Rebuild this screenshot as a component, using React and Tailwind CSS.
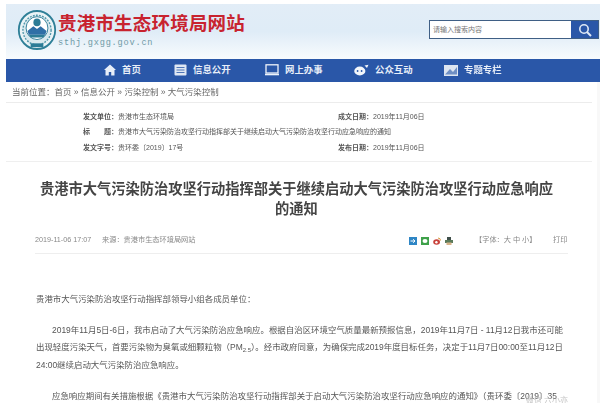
import React from "react";

const FONT = { fontFamily: '"Liberation Sans","Noto Sans CJK SC",sans-serif' };

function Logo() {
  return (
    <svg width="40" height="40" viewBox="0 0 44 42" className="shrink-0" preserveAspectRatio="none">
      <circle cx="22" cy="21" r="20" fill="#eaf3f6" stroke="#2e7f97" strokeWidth="2" />
      <circle cx="22" cy="21" r="15.5" fill="#d9e9ee" stroke="#4f97aa" strokeWidth="1.5" strokeDasharray="2 1.4" />
      <circle cx="22" cy="19" r="12" fill="#fff" stroke="#2c7c96" strokeWidth="1" />
      <circle cx="22" cy="13" r="4" fill="#2c7c96" />
      <path d="M11.5 22 L18 17 L22 20 L26 17 L32.5 22 L31 26 L13 26 Z" fill="#2f6fa6" />
      <path d="M13 26 H31 L29 29 H15 Z" fill="#2c7c96" />
      <path d="M15 35 H29 V39 H15 Z" fill="#2c7c96" />
    </svg>
  );
}

const Home = () => (
  <svg width="12" height="12" viewBox="0 0 12 12"><path d="M6 0.5 L12 6 H10.5 V11.5 H7.2 V8 H4.8 V11.5 H1.5 V6 H0 Z" fill="#e8eef8" /></svg>
);
const Doc = () => (
  <svg width="13" height="12" viewBox="0 0 13 12"><rect x="0.5" y="0.5" width="12" height="11" rx="1" fill="#dfe7f3" /><path d="M2.5 3.5H10.5M2.5 6H10.5M2.5 8.5H10.5" stroke="#4f76b8" strokeWidth="1" /></svg>
);
const Monitor = () => (
  <svg width="14" height="12" viewBox="0 0 14 12"><rect x="1" y="0.8" width="12" height="8.2" fill="none" stroke="#eef3fa" strokeWidth="1.3" /><path d="M0 10.5H14" stroke="#eef3fa" strokeWidth="1.6" /></svg>
);
const Chat = () => (
  <svg width="15" height="12" viewBox="0 0 15 12"><ellipse cx="5.8" cy="7" rx="5.6" ry="4.4" fill="#f3f6fb" /><circle cx="3.6" cy="7" r="0.9" fill="#2a57a8" /><circle cx="7.6" cy="7" r="0.9" fill="#2a57a8" /><path d="M10.5 1.5 L14.5 0.8 L13 4 Z" fill="#f3f6fb" /></svg>
);
const Pic = () => (
  <svg width="14" height="11" viewBox="0 0 14 11"><rect width="14" height="11" fill="#dde5f1" /><path d="M1 9.5 L6 4 L9 7 L13 2 V9.5 Z" fill="#6f8fc4" /></svg>
);

const navItems = [
  { Icon: Home, label: "首页", w: "w-[70px]" },
  { Icon: Doc, label: "信息公开", w: "w-[91px]" },
  { Icon: Monitor, label: "网上办事", w: "w-[89px]" },
  { Icon: Chat, label: "公众互动", w: "w-[90px]" },
  { Icon: Pic, label: "专题专栏", w: "w-[70px]" },
];

function MetaRow({ a, b, c, d }) {
  return (
    <div className="flex h-[15.5px] items-center whitespace-nowrap text-[7px] text-[#555]">
      <span className="w-[255px] shrink-0"><b className="font-bold">{a}</b>{b}</span>
      {c && <span><b className="font-bold">{c}</b>{d}</span>}
    </div>
  );
}

function ShareIcons() {
  return (
    <span className="flex w-[66px] translate-y-[1px] gap-[4px]">
      <svg width="8" height="8" viewBox="0 0 8 8"><rect width="8" height="8" fill="#2f86c5" /><path d="M1.5 4H6M4.2 2.2L6 4L4.2 5.8" fill="none" stroke="#fff" strokeWidth="1" /></svg>
      <svg width="8" height="8" viewBox="0 0 8 8"><rect width="8" height="8" fill="#3fa14a" /><ellipse cx="4" cy="4" rx="2.5" ry="2" fill="#fff" /></svg>
      <svg width="8" height="8" viewBox="0 0 8 8"><ellipse cx="3.6" cy="5" rx="3.4" ry="2.8" fill="#c8413a" /><circle cx="3.4" cy="5.2" r="1.2" fill="#fff" /><path d="M5 1 Q7.5 1 7.5 3.5" fill="none" stroke="#d99a3a" strokeWidth="1" /></svg>
      <svg width="8" height="8" viewBox="0 0 8 8"><rect x="2" y="0" width="4" height="3" fill="#3f4f4a" /><rect y="3" width="8" height="3" fill="#5a7a5a" /><rect x="1.5" y="5.5" width="5" height="2.5" fill="#d9b48a" /></svg>
    </span>
  );
}

export default function App() {
  return (
    <div style={FONT} className="relative h-[403px] w-[600px] overflow-hidden bg-white pt-[4px] pl-[6px]">
      <div className="blur-[0.5px]">
        <header className="flex h-[55px] items-start bg-gradient-to-b from-[#e2edf7] via-[#dfecf7] to-[#f8fbfd] pl-[11px] pt-[6px]">
          <Logo />
          <div className="ml-[1px] mt-[2px] w-[371px] shrink-0">
            <div className="text-[18.5px] font-bold leading-[24px] tracking-[0.2px] text-[#c8232f]">贵港市生态环境局网站</div>
            <div style={{ fontFamily: '"Liberation Mono",monospace' }} className="mt-[2px] text-[8.6px] leading-[10px] tracking-[0.8px] text-[#6f9aa6]">sthj.gxgg.gov.cn</div>
          </div>
          <div className="mt-[10px] flex h-[19px] w-[170px] border border-[#3f5f85] bg-white">
            <div className="flex-1 pl-[3px] text-[7px] leading-[17px] text-[#777]">请输入搜索内容</div>
            <div className="flex w-[27px] items-center justify-center bg-[#2a57a8]">
              <svg width="14" height="14" viewBox="0 0 14 14" fill="none" stroke="#dfe9f5" strokeWidth="1.6"><circle cx="6" cy="6" r="4.2" /><path d="M9 9L13 13" strokeWidth="2" /></svg>
            </div>
          </div>
        </header>

        <nav className="flex h-[23px] items-center bg-[#2a57a8] pl-[98px] text-[9.4px] font-bold text-[#e8eef8]">
          {navItems.map(({ Icon, label, w }) => (
            <div key={label} className={`flex items-center gap-[6px] ${w}`}>
              <Icon />
              <span className="whitespace-nowrap">{label}</span>
            </div>
          ))}
        </nav>

        <div className="border-r-[3px] border-[#f8f8f8]">
          <div className="mr-[5px] flex h-[21px] items-center border-b border-[#ececec] pl-[6px] text-[8.5px] text-[#666]">
            当前位置：首页 » 信息公开 » 污染控制 » 大气污染控制
          </div>

          <div className="ml-[77px] pt-[6px]">
            <MetaRow a="发文单位：" b="贵港市生态环境局" c="成文日期：" d="2019年11月06日" />
            <MetaRow a="标　　题：" b="贵港市大气污染防治攻坚行动指挥部关于继续启动大气污染防治攻坚行动应急响应的通知" />
            <MetaRow a="发文字号：" b="贵环委〔2019〕17号" c="发布日期：" d="2019年11月06日" />
          </div>
          <div className="mr-[5px] mt-[5px] h-px bg-[#efefef]" />

          <h1 className="mx-auto mt-[17px] w-[520px] -translate-x-[5px] text-center text-[14.25px] font-bold leading-[20px] text-[#444]">
            贵港市大气污染防治攻坚行动指挥部关于继续启动大气污染防治攻坚行动应急响应的通知
          </h1>

          <div className="mt-[14px] flex h-[15px] items-center pl-[29px] text-[7.2px] text-[#888]">
            <span className="w-[67px]">2019-11-06 17:07</span>
            <span className="w-[307px]">来源：贵港市生态环境局网站</span>
            <ShareIcons />
            <span className="w-[78px] whitespace-nowrap">【字体：大 中 小】</span>
            <span>打印</span>
          </div>
          <div className="ml-[29px] mr-[29px] mt-[5px] h-px bg-[#eeeeee]" />

          <div className="ml-[30px] w-[534px] pt-[37px] text-[8.45px] text-[#555]">
            <p className="leading-[16px]">贵港市大气污染防治攻坚行动指挥部领导小组各成员单位：</p>
            <p className="mt-[15px] indent-[16px] leading-[17.5px]">
              2019年11月5日-6日，我市启动了大气污染防治应急响应。根据自治区环境空气质量最新预报信息，2019年11月7日 - 11月12日我市还可能出现轻度污染天气，首要污染物为臭氧或细颗粒物（PM<sub className="text-[6px]">2.5</sub>）。经市政府同意，为确保完成2019年度目标任务，决定于11月7日00:00至11月12日24:00继续启动大气污染防治应急响应。
            </p>
            <p className="mt-[14px] indent-[16px] leading-[17px]">
              应急响应期间有关措施根据《贵港市大气污染防治攻坚行动指挥部关于启动大气污染防治攻坚行动应急响应的通知》（贵环委〔2019〕35
            </p>
          </div>
        </div>
      </div>
      <span className="absolute bottom-[-4px] right-[32px] text-[8px] text-[#c4c4c4]">微信 六小亦</span>
    </div>
  );
}
